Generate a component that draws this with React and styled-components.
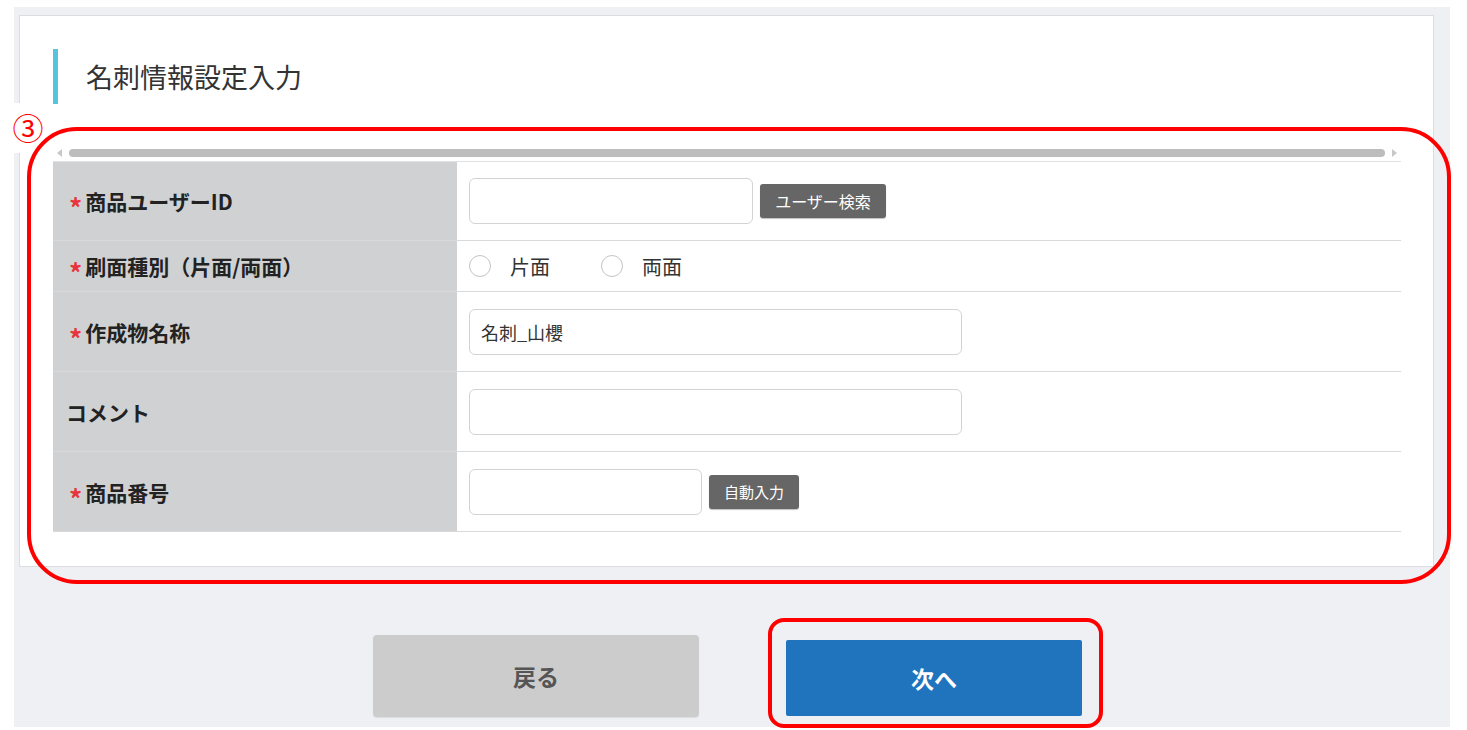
import React from 'react';
import styled, { createGlobalStyle } from 'styled-components';

const GlobalStyle = createGlobalStyle`
    body {
        margin: 0;
        background: #fff;
        font-family: "Noto Sans CJK JP", "Noto Sans", sans-serif;
        color: #333;
    }
`;

const Page = styled.div`
    position: relative;
    width: 1467px;
    height: 730px;
    overflow: hidden;
`;

const Panel = styled.div`
    margin: 7px 0 0 14px;
    width: 1436px;
    height: 720px;
    background: #eff0f4;
    padding: 8px 0 0 5px;
    box-sizing: border-box;
`;

const Card = styled.div`
    width: 1415px;
    height: 552px;
    background: #fff;
    border: 1px solid #dcdde0;
    box-sizing: border-box;
    padding: 33px 32px 0 33px;
`;

const Title = styled.h2`
    margin: 0;
    height: 55px;
    display: flex;
    align-items: center;
    border-left: 5px solid #56c3df;
    padding-left: 28px;
    font-size: 27px;
    font-weight: 400;
    color: #333;
`;

const ScrollTrack = styled.div`
    margin-top: 41px;
    height: 16px;
    display: flex;
    align-items: center;
    gap: 7px;
    padding: 0 4px;
    border-bottom: 1px solid #e2e2e2;
`;

const Arrow = styled.span`
    width: 0;
    height: 0;
    border-top: 4px solid transparent;
    border-bottom: 4px solid transparent;
    ${(p) => (p.$dir === 'left' ? 'border-right: 5px solid #c8c8c8;' : 'border-left: 5px solid #c8c8c8;')}
`;

const Thumb = styled.div`
    flex: 1;
    height: 8px;
    border-radius: 4px;
    background: #bdbdbd;
`;

const Table = styled.div`
    display: flex;
    flex-direction: column;
`;

const Row = styled.div`
    display: grid;
    grid-template-columns: 404px 1fr;
    height: ${(p) => p.$h}px;
    box-sizing: border-box;
    border-bottom: 1px solid #d9d9d9;
`;

const Label = styled.div`
    background: #d0d1d3;
    display: flex;
    align-items: center;
    padding-left: 13px;
    font-size: 21px;
    font-weight: 700;
    color: #222;
`;

const Req = styled.span`
    color: #e8343c;
    font-size: 26px;
    line-height: 1;
    margin-top: 12px;
    margin-right: 3px;
    margin-left: 3px;
`;

const Value = styled.div`
    display: flex;
    align-items: center;
    padding-left: 12px;
    gap: 7px;
`;

const Input = styled.div`
    width: ${(p) => p.$w}px;
    height: 46px;
    border: 1px solid #d3d3d3;
    border-radius: 6px;
    box-sizing: border-box;
    display: flex;
    align-items: center;
    padding-left: 11px;
    font-size: 18px;
    color: #333;
    background: #fff;
`;

const SmallButton = styled.div`
    height: 34px;
    width: ${(p) => p.$w}px;
    background: #666;
    color: #fff;
    border-radius: 3px;
    display: flex;
    align-items: center;
    justify-content: center;
    font-size: ${(p) => p.$fs}px;
    box-shadow: 0 1px 1px rgba(0, 0, 0, 0.25);
`;

const RadioGroup = styled.label`
    display: flex;
    align-items: center;
    font-size: 20px;
    color: #333;
    margin-right: 44px;
`;

const Circle = styled.span`
    width: 20px;
    height: 20px;
    border: 1px solid #c4c4c4;
    border-radius: 50%;
    margin-right: 19px;
    background: #fff;
`;

const Actions = styled.div`
    display: flex;
    align-items: center;
    gap: 87px;
    padding-left: 354px;
    margin-top: 68px;
`;

const BackButton = styled.div`
    width: 326px;
    height: 82px;
    background: #cccccc;
    border-radius: 4px;
    display: flex;
    align-items: center;
    justify-content: center;
    font-size: 23px;
    font-weight: 700;
    color: #555;
    box-shadow: 0 1px 1px rgba(0, 0, 0, 0.08);
`;

const NextButton = styled.div`
    width: 296px;
    height: 76px;
    background: #1f74bd;
    border-radius: 2px;
    display: flex;
    align-items: center;
    justify-content: center;
    font-size: 23px;
    font-weight: 700;
    color: #fff;
    margin-top: 3px;
`;

const Callout = styled.div`
    position: absolute;
    left: ${(p) => p.$x}px;
    top: ${(p) => p.$y}px;
    width: ${(p) => p.$w}px;
    height: ${(p) => p.$h}px;
    border: 4px solid #ff0000;
    border-radius: ${(p) => p.$r}px;
    box-sizing: border-box;
    pointer-events: none;
`;

const Marker = styled.div`
    position: absolute;
    left: 0;
    top: 103px;
    width: 48px;
    height: 50px;
    background: #fff;
    color: #ff0000;
    font-size: 31px;
    line-height: 1;
    display: flex;
    justify-content: center;
    padding-top: 8px;
    padding-left: 8px;
    box-sizing: border-box;
    font-family: "Noto Sans CJK JP", sans-serif;
`;

const rows = [
    { label: '商品ユーザーID', req: true, h: 79, kind: 'search' },
    { label: '刷面種別（片面/両面）', req: true, h: 51, kind: 'radio' },
    { label: '作成物名称', req: true, h: 80, kind: 'name' },
    { label: 'コメント', req: false, h: 80, kind: 'comment' },
    { label: '商品番号', req: true, h: 80, kind: 'number' },
];

const renderValue = (kind) => {
    switch (kind) {
        case 'search':
            return (
                <>
                    <Input $w={284} />
                    <SmallButton $w={126} $fs={16}>ユーザー検索</SmallButton>
                </>
            );
        case 'radio':
            return (
                <>
                    <RadioGroup><Circle />片面</RadioGroup>
                    <RadioGroup><Circle />両面</RadioGroup>
                </>
            );
        case 'name':
            return <Input $w={493}>名刺_山櫻</Input>;
        case 'comment':
            return <Input $w={493} />;
        default:
            return (
                <>
                    <Input $w={233} />
                    <SmallButton $w={90} $fs={15}>自動入力</SmallButton>
                </>
            );
    }
};

const App = () => {
    return (
        <Page>
            <GlobalStyle />
            <Panel>
                <Card>
                    <Title>名刺情報設定入力</Title>
                    <ScrollTrack>
                        <Arrow $dir="left" />
                        <Thumb />
                        <Arrow $dir="right" />
                    </ScrollTrack>
                    <Table>
                        {rows.map((r) => (
                            <Row key={r.label} $h={r.h}>
                                <Label>
                                    {r.req && <Req>*</Req>}
                                    {r.label}
                                </Label>
                                <Value>{renderValue(r.kind)}</Value>
                            </Row>
                        ))}
                    </Table>
                </Card>
                <Actions>
                    <BackButton>戻る</BackButton>
                    <NextButton>次へ</NextButton>
                </Actions>
            </Panel>
            <Marker>③</Marker>
            <Callout $x={27} $y={127} $w={1424} $h={457} $r={50} />
            <Callout $x={768} $y={618} $w={335} $h={110} $r={16} />
        </Page>
    );
};

export default App;
